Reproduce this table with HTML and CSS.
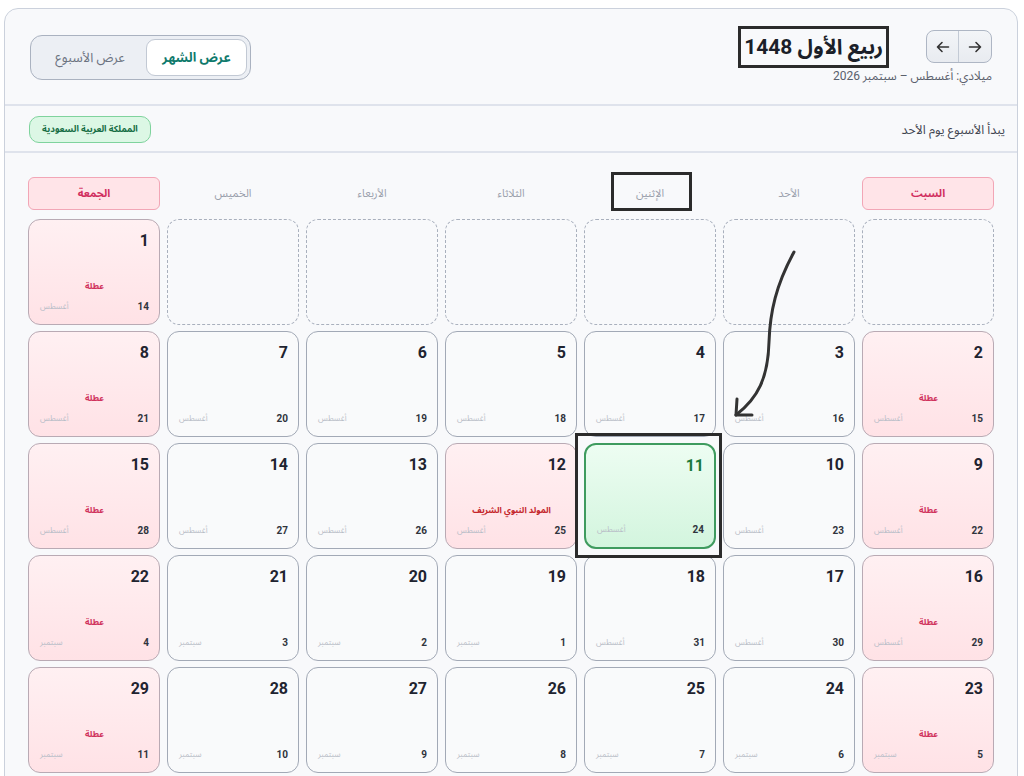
FILE: index.html
```html
<!DOCTYPE html>
<html lang="ar" dir="rtl">
<head>
<meta charset="utf-8">
<title>التقويم الهجري</title>
<link rel="stylesheet" href="styles.css">
</head>
<body>
<div class="page">
  <div class="panel">
    <header class="header">
      <div class="title-block">
        <div class="title-row">
          <div class="nav">
            <button class="nav-btn" aria-label="السابق"><svg width="16" height="16" viewBox="0 0 16 16"><path d="M2.5 8h11M9 3.5L13.5 8 9 12.5" fill="none" stroke="#333" stroke-width="1.6" stroke-linecap="round" stroke-linejoin="round"/></svg></button>
            <button class="nav-btn" aria-label="التالي"><svg width="16" height="16" viewBox="0 0 16 16"><path d="M13.5 8h-11M7 3.5L2.5 8 7 12.5" fill="none" stroke="#333" stroke-width="1.6" stroke-linecap="round" stroke-linejoin="round"/></svg></button>
          </div>
          <h1 class="title">ربيع الأول 1448</h1>
        </div>
        <div class="subtitle">ميلادي: أغسطس – سبتمبر 2026</div>
      </div>
      <div class="toggle">
        <button class="toggle-btn active">عرض الشهر</button>
        <button class="toggle-btn">عرض الأسبوع</button>
      </div>
    </header>
    <div class="infobar">
      <span class="info-text">يبدأ الأسبوع يوم الأحد</span>
      <span class="badge">المملكة العربية السعودية</span>
    </div>
    <section class="calendar">
      <div class="weekdays">
        <div class="wd weekend">السبت</div>
        <div class="wd">الأحد</div>
        <div class="wd">الإثنين</div>
        <div class="wd">الثلاثاء</div>
        <div class="wd">الأربعاء</div>
        <div class="wd">الخميس</div>
        <div class="wd weekend">الجمعة</div>
      </div>
      <div class="grid" id="grid"></div>
    </section>
  </div>

  <div class="mark mark-monday"></div>
  <div class="mark mark-today"></div>
  <svg class="arrow" width="1024" height="776" viewBox="0 0 1024 776">
    <path d="M794 252 C 776 285, 770 312, 769 342 C 768 378, 758 398, 736 415" fill="none" stroke="#333" stroke-width="3" stroke-linecap="round"/>
    <path d="M737 399 L736 415 L752 415" fill="none" stroke="#333" stroke-width="3" stroke-linecap="round" stroke-linejoin="round"/>
  </svg>
</div>
<script>
(function(){
  var grid = document.getElementById('grid');
  var html = '';
  for (var i = 0; i < 6; i++) html += '<div class="cell empty"></div>';
  var col = 6;
  for (var d = 1; d <= 29; d++) {
    var g = d + 13, m = 'أغسطس';
    if (g > 31) { g -= 31; m = 'سبتمبر'; }
    var weekend = (col === 0 || col === 6);
    var cls = 'cell';
    var label = '';
    if (d === 11) cls += ' today';
    else if (d === 12) { cls += ' holiday occasion'; label = '<div class="label">المولد النبوي الشريف</div>'; }
    else if (weekend) { cls += ' holiday'; label = '<div class="label">عطلة</div>'; }
    html += '<div class="' + cls + '"><div class="hday">' + d + '</div><div class="spacer"></div>' + label +
      '<div class="foot"><span class="gday">' + g + '</span><span class="gmon">' + m + '</span></div></div>';
    col = (col + 1) % 7;
  }
  grid.innerHTML = html;
})();
</script>
</body>
</html>
```

FILE: styles.css
```css
* { box-sizing: border-box; }
html, body { margin: 0; padding: 0; }
body {
  background: #ffffff;
  font-family: Roboto, "Noto Sans Arabic", "Noto Sans", "DejaVu Sans", sans-serif;
  color: #1f2430;
}
.page {
  position: relative;
  width: 1024px;
  height: 776px;
  overflow: hidden;
  padding: 8px 6px 0 4px;
}
.panel {
  background: #f8f9fb;
  border: 1px solid #cbd1dc;
  border-radius: 14px;
  height: 790px;
}
.header {
  height: 97px;
  display: flex;
  align-items: flex-start;
  justify-content: space-between;
  padding: 21px 25px 0 25px;
  border-bottom: 2px solid #dfe3ec;
}
.title-block { display: flex; flex-direction: column; gap: 5px; }
.title-row { display: flex; align-items: center; gap: 43px; }
.nav {
  display: flex;
  border: 1px solid #aeb6c4;
  border-radius: 8px;
  background: linear-gradient(#f3f5f8, #e8ebf0);
  overflow: hidden;
  height: 33px;
}
.nav-btn {
  width: 32px;
  border: 0;
  background: transparent;
  display: flex;
  align-items: center;
  justify-content: center;
  padding: 0;
}
.nav-btn + .nav-btn { border-right: 1px solid #c3cad5; }
.title {
  margin: 0;
  font-size: 21px;
  font-weight: 700;
  color: #1b1f29;
  line-height: 30px;
  outline: 3px solid #2b2b2b;
  outline-offset: 3px;
}
.subtitle { font-size: 12px; line-height: 16px; color: #5a606c; }
.toggle {
  display: flex;
  background: #eceff4;
  border: 1.5px solid #aab2c0;
  border-radius: 12px;
  padding: 3px;
  height: 45px;
  margin-top: 5px;
}
.toggle-btn {
  font-family: inherit;
  font-size: 13px;
  border: 1px solid transparent;
  background: transparent;
  color: #6b7280;
  border-radius: 9px;
  white-space: nowrap;
  padding: 0;
}
.toggle-btn.active {
  background: #fff;
  border-color: #c2c9d4;
  color: #0f7a6c;
  font-weight: 700;
  width: 101px;
}
.toggle-btn:not(.active) { width: 112px; }
.infobar {
  height: 47px;
  display: flex;
  align-items: center;
  justify-content: space-between;
  padding: 2px 12px 0 24px;
  border-bottom: 2px solid #dfe3ec;
}
.info-text { font-size: 12.5px; color: #3f4450; }
.badge {
  font-size: 9px;
  font-weight: 700;
  color: #146c43;
  background: #dcf7e5;
  border: 1px solid #7fd39d;
  border-radius: 10px;
  padding: 3px 12px;
}
.calendar { padding: 24px 23px 0 23px; }
.weekdays {
  display: grid;
  grid-template-columns: repeat(7, 1fr);
  column-gap: 7px;
  height: 33px;
  margin-bottom: 9px;
}
.wd {
  display: flex;
  align-items: center;
  justify-content: center;
  font-size: 11px;
  color: #9aa0ac;
  border-radius: 6px;
}
.wd.weekend {
  background: #ffe4e8;
  border: 1px solid #f2a6b6;
  color: #d12f60;
  font-weight: 700;
}
.grid {
  display: grid;
  grid-template-columns: repeat(7, 1fr);
  grid-auto-rows: 106px;
  column-gap: 7px;
  row-gap: 6px;
}
.cell {
  border: 1.5px solid #a2a9b6;
  border-radius: 12px;
  background: #f9fafb;
  display: flex;
  flex-direction: column;
  padding: 11px 10px 10px 11px;
}
.cell.empty {
  border: 1.5px dashed #a9b0bd;
  background: transparent;
}
.cell.holiday {
  background: linear-gradient(#fff0f2, #ffe2e6);
  border-color: #b9aab4;
}
.cell.today {
  background: linear-gradient(#edfdf2, #d3f5de);
  border: 2px solid #3f9b5f;
}
.hday {
  font-size: 16px;
  font-weight: 700;
  color: #1f2430;
  line-height: 20px;
}
.today .hday { color: #1b7a3e; }
.spacer { flex: 1; }
.label {
  text-align: center;
  font-size: 8.5px;
  font-weight: 700;
  color: #d0335d;
  margin-bottom: 3px;
}
.occasion .label { color: #c4262b; }
.foot {
  display: flex;
  justify-content: space-between;
  align-items: center;
  height: 16px;
}
.gday { font-size: 10px; font-weight: 700; color: #30343d; }
.gmon { font-size: 8px; color: #b9bec8; }
.mark {
  position: absolute;
  border: 3px solid #2b2b2b;
  pointer-events: none;
}
.mark-monday { left: 611px; top: 172px; width: 81px; height: 39px; }
.mark-today { left: 575px; top: 433px; width: 147px; height: 125px; }
.arrow { position: absolute; left: 0; top: 0; pointer-events: none; }
```
